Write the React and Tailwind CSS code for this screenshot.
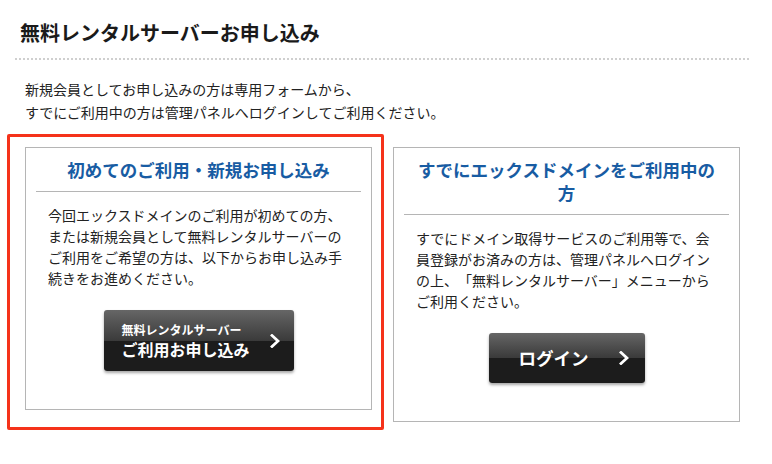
import React from "react";

const font = { fontFamily: '"Noto Sans CJK JP", "Noto Sans", sans-serif' };

function Chevron({ className }) {
  return (
    <svg viewBox="0 0 10 14" className={className} fill="none">
      <polyline points="2,1.5 8,7 2,12.5" stroke="white" strokeWidth="2.8" strokeLinecap="square" />
    </svg>
  );
}

function DarkButton({ className, children }) {
  return (
    <button className={`relative flex items-center overflow-hidden rounded-[3px] text-white shadow-[0_2px_3px_rgba(0,0,0,0.35)] ${className}`}>
      <span className="absolute inset-x-0 top-0 h-1/2 bg-gradient-to-b from-[#666] to-[#3a3a3a]" />
      <span className="absolute inset-x-0 bottom-0 h-1/2 bg-[#1c1c1c]" />
      <span className="relative flex w-full items-center">{children}</span>
    </button>
  );
}

function Card({ title, body, children }) {
  return (
    <div className="w-[347px] border border-[#b5b5b5] bg-white pt-[10px] pb-[38px]">
      <h2 className="px-[22px] text-center text-[17.5px] font-bold leading-[23px] text-[#185ca3]">{title}</h2>
      <div className="mx-[10px] mt-[10px] h-px bg-[#b5b5b5]" />
      <p className="mt-[13px] px-[22px] text-[14px] leading-[21px] text-[#222]">{body}</p>
      <div className="mt-[21px] flex justify-center">{children}</div>
    </div>
  );
}

export default function App() {
  return (
    <div className="min-h-screen w-[772px] bg-white pt-[21px] [text-spacing-trim:space-all]" style={font}>
      <div className="mx-[15px] w-[734px] border-b-2 border-dotted border-[#cfcfcf] pb-[13px] pl-[5px]">
        <h1 className="text-[20px] font-bold leading-[24px] text-[#1a1a1a]">無料レンタルサーバーお申し込み</h1>
      </div>

      <p className="mt-[18px] pl-[25px] text-[14px] leading-[23px] text-[#222]">
        新規会員としてお申し込みの方は専用フォームから、
        <br />
        すでにご利用中の方は管理パネルへログインしてご利用ください。
      </p>

      <div className="mt-[23px] flex items-start gap-[21px] pl-[25px]">
        <div className="relative">
          <div className="pointer-events-none absolute -left-[18px] -top-[13px] -right-[12px] -bottom-[20px] rounded-[2px] border-[3px] border-[#f5321a]" />
          <Card
            title="初めてのご利用・新規お申し込み"
            body="今回エックスドメインのご利用が初めての方、または新規会員として無料レンタルサーバーのご利用をご希望の方は、以下からお申し込み手続きをお進めください。"
          >
            <DarkButton className="h-[61px] w-[190px]">
              <span className="flex flex-1 flex-col items-start pl-[18px] font-bold">
                <span className="text-[12px] leading-[16px]">無料レンタルサーバー</span>
                <span className="mt-[1px] text-[16px] leading-[20px]">ご利用お申し込み</span>
              </span>
              <Chevron className="mr-[14px] h-[14px] w-[10px]" />
            </DarkButton>
          </Card>
        </div>

        <Card
          title="すでにエックスドメインをご利用中の方"
          body="すでにドメイン取得サービスのご利用等で、会員登録がお済みの方は、管理パネルへログインの上、「無料レンタルサーバー」メニューからご利用ください。"
        >
          <DarkButton className="h-[50px] w-[156px]">
            <span className="flex-1 pl-[30px] text-left text-[17.5px] font-bold leading-[24px]">ログイン</span>
            <Chevron className="mr-[16px] h-[14px] w-[10px]" />
          </DarkButton>
        </Card>
      </div>
    </div>
  );
}
